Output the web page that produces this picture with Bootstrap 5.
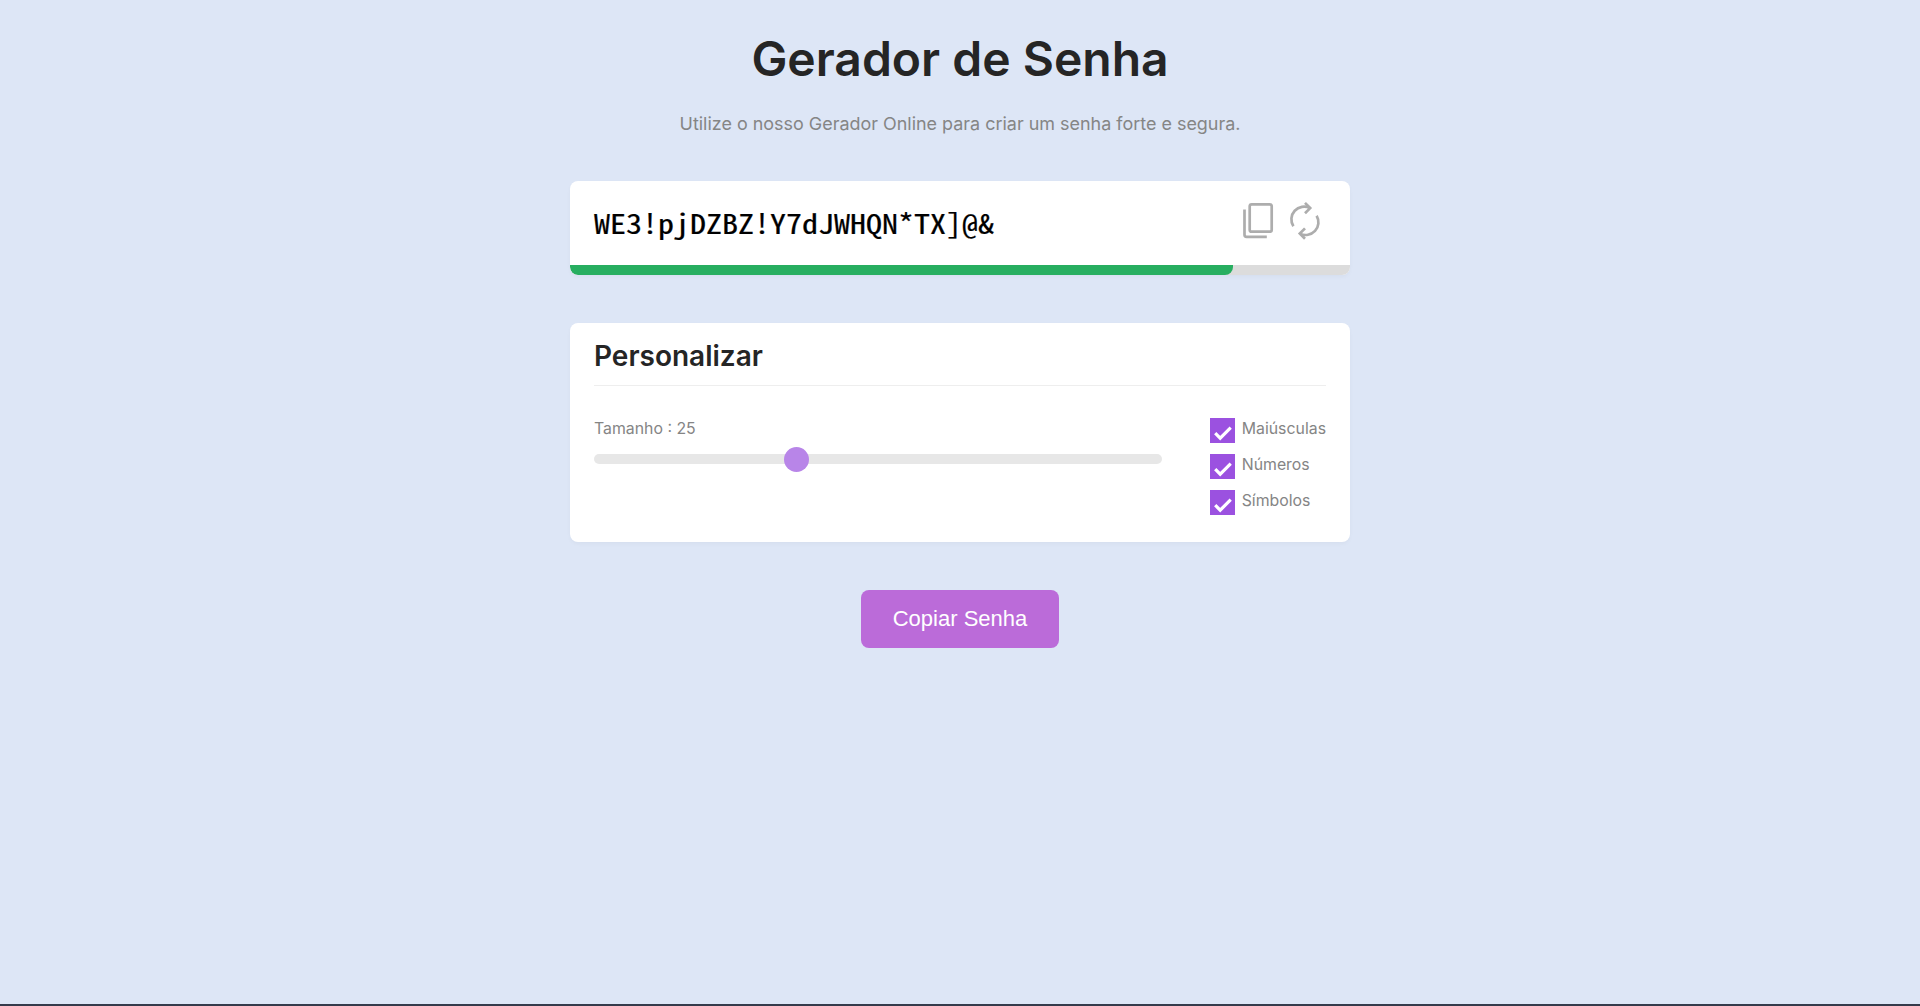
<!DOCTYPE html>
<html lang="pt-BR">
<head>
<meta charset="utf-8">
<meta name="viewport" content="width=device-width, initial-scale=1">
<title>Gerador de Senha</title>
<link rel="stylesheet" href="https://cdn.jsdelivr.net/npm/bootstrap@5.3.0/dist/css/bootstrap.min.css">
<style>
body{background:#dde6f6;font-family:Inter,"Noto Sans",sans-serif;color:#252525;border-bottom:2px solid #343a4b}
.gen-wrap{width:780px}
.gen-title{font-size:48px;font-weight:600;line-height:58px;margin-top:30px;margin-bottom:24px}
.gen-sub{font-size:17.95px;line-height:23px;color:#858585;margin-bottom:46px}
.panel{border:0;border-radius:8px;box-shadow:0 2px 4px rgba(0,0,0,.03)}
.pass-row{height:84px;padding:0 24px}
.pass-text{font-family:"Noto Sans Mono CJK JP","DejaVu Sans Mono",monospace;font-size:32px;line-height:40px;color:#000;-webkit-text-stroke:.25px #000;transform:scaleY(.86);margin-bottom:2px}
.pass-tools{margin-bottom:6px}
.strength{height:10px;background:#dcdcdc;border-radius:0 0 8px 8px}
.strength .progress-bar{background:#27ae60;border-radius:0 0 8px 8px}
.pers-card{height:219px;padding:16px 24px 0;margin-top:48px}
.pers-title{font-size:28px;font-weight:600;line-height:34px;padding-bottom:12px;border-bottom:1px solid #eee;margin-bottom:32px}
.gray-label{font-size:15.85px;line-height:22px;color:#858585}
.len-range{-webkit-appearance:none;appearance:none;width:568px;height:10px;border-radius:5px;background:#e7e7e7;display:block;margin:14px 0 0}
.len-range::-webkit-slider-thumb{-webkit-appearance:none;width:25px;height:25px;border-radius:50%;background:#b885e8}
.opts{gap:11px}
.opt{gap:7px}
.tick{width:25px;height:25px;background:#9b51e0}
.copy-btn,.copy-btn:hover{font-family:"Liberation Sans",Arial,sans-serif;font-size:22px;width:198px;height:58px;padding:0 0 2px;border:0;border-radius:8px;background:#bb6bd9;color:#fff;margin-top:48px}
</style>
<script src="https://cdn.jsdelivr.net/npm/bootstrap@5.3.0/dist/js/bootstrap.bundle.min.js"></script>
</head>
<body class="min-vh-100 overflow-hidden">
<svg class="d-none"><symbol id="ck" viewBox="0 0 25 25"><path d="M5.2 15.2l5 5L20.7 9.6" fill="none" stroke="#fff" stroke-width="3.2"/></symbol></svg>
<main class="gen-wrap mx-auto d-flex flex-column">
<h1 class="gen-title text-center">Gerador de Senha</h1>
<p class="gen-sub text-center">Utilize o nosso Gerador Online para criar um senha forte e segura.</p>
<section class="card panel">
<div class="pass-row d-flex align-items-center justify-content-between">
<span class="pass-text">WE3!pjDZBZ!Y7dJWHQN*TX]@&amp;</span>
<svg width="88" height="44" viewBox="0 0 88 44" fill="none" stroke="#adadad" stroke-width="2.7" class="pass-tools flex-shrink-0"><rect x="11.7" y="6.3" width="22" height="27.4" rx="2"/><path d="M6.5 11.5V36.8q0 2 2 2H28.8"/><path d="M55.4 28.2A12.7 12.7 0 0 1 72 10.1M67 4.9l5.2 5.2L67 15.3M78.6 17.7A12.7 12.7 0 0 1 62 35.6M67 30.4l-5.2 5.2L67 40.8"/></svg>
</div>
<div class="progress strength"><div class="progress-bar" style="width:85%"></div></div>
</section>
<section class="card panel pers-card">
<h2 class="pers-title">Personalizar</h2>
<div class="d-flex justify-content-between">
<div><label class="gray-label d-block" for="len">Tamanho : 25</label><input id="len" class="len-range" type="range" min="4" max="64" value="25"></div>
<div class="d-flex flex-column opts">
<div class="d-flex opt"><svg class="tick"><use href="#ck"/></svg><span class="gray-label">Maiúsculas</span></div>
<div class="d-flex opt"><svg class="tick"><use href="#ck"/></svg><span class="gray-label">Números</span></div>
<div class="d-flex opt"><svg class="tick"><use href="#ck"/></svg><span class="gray-label">Símbolos</span></div>
</div>
</div>
</section>
<button class="btn copy-btn align-self-center">Copiar Senha</button>
</main>
</body>
</html>
